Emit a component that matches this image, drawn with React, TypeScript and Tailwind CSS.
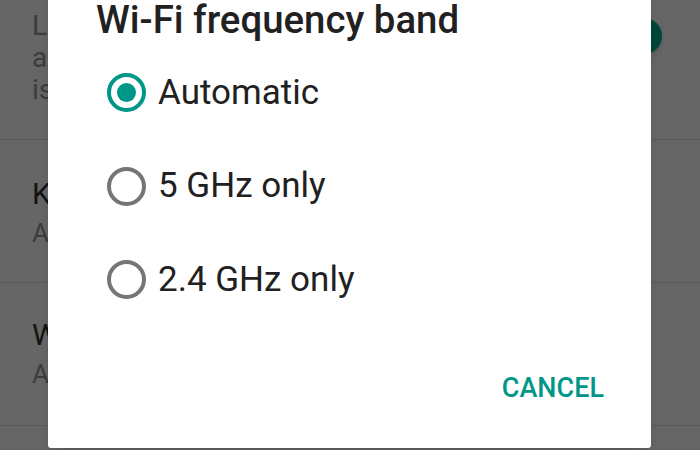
import React from 'react';

type Option = { label: string; selected?: boolean };

const options: Option[] = [
  { label: 'Automatic', selected: true },
  { label: '5 GHz only' },
  { label: '2.4 GHz only' },
];

// Material style radio button
function Radio({ selected }: { selected?: boolean }) {
  return (
    <span
      className={
        'flex h-[39px] w-[39px] shrink-0 items-center justify-center rounded-full border-[4px] ' +
        (selected ? 'border-[#009688]' : 'border-[#757575]')
      }
    >
      {selected && <span className="h-[19px] w-[19px] rounded-full bg-[#009688]" />}
    </span>
  );
}

export default function App() {
  return (
    <div
      className="relative h-[450px] w-[700px] overflow-hidden bg-[#666666]"
      style={{ fontFamily: 'Roboto, "Noto Sans", sans-serif' }}
    >
      {/* Dimmed settings list behind the dialog */}
      <div className="flex flex-col">
        <div className="h-[140px] border-b border-[#5a5a5a] pl-[32px] pt-[10px] text-[28px] leading-[32px] text-[#3c3c3c]">
          <div>Let apps</div>
          <div>apply</div>
          <div>is</div>
        </div>
        <div className="h-[143px] border-b border-[#5a5a5a] pl-[32px] pt-[34px]">
          <div className="text-[30px] leading-[40px] text-[#141414]">Keep Wi-Fi on</div>
          <div className="text-[26px] leading-[38px] text-[#3c3c3c]">Always</div>
        </div>
        <div className="h-[143px] border-b border-[#5a5a5a] pl-[32px] pt-[32px]">
          <div className="text-[30px] leading-[40px] text-[#141414]">Wi-Fi band</div>
          <div className="text-[26px] leading-[38px] text-[#3c3c3c]">Automatic</div>
        </div>
      </div>

      {/* switch thumb peeking out from behind the dialog */}
      <div className="absolute left-[626px] top-[18px] h-[36px] w-[36px] rounded-full bg-[#00463d] shadow-md" />

      {/* Dialog */}
      <div className="absolute left-[48px] top-[-40px] flex h-[488px] w-[603px] flex-col rounded-[3px] bg-white shadow-lg">
        <h2 className="pl-[48px] pt-[36px] text-[38.4px] font-medium leading-[48px] text-[#212121]">
          Wi-Fi frequency band
        </h2>
        <div className="mt-[2px] flex flex-col">
          {options.map((o) => (
            <div key={o.label} className="flex h-[93.5px] items-center gap-[12px] pl-[59px]">
              <Radio selected={o.selected} />
              <span className="text-[35px] text-[#212121]">{o.label}</span>
            </div>
          ))}
        </div>
        <div className="mt-auto flex justify-end pb-[40px] pr-[47px]">
          <span className="text-[27px] font-medium text-[#009688]">CANCEL</span>
        </div>
      </div>
    </div>
  );
}
